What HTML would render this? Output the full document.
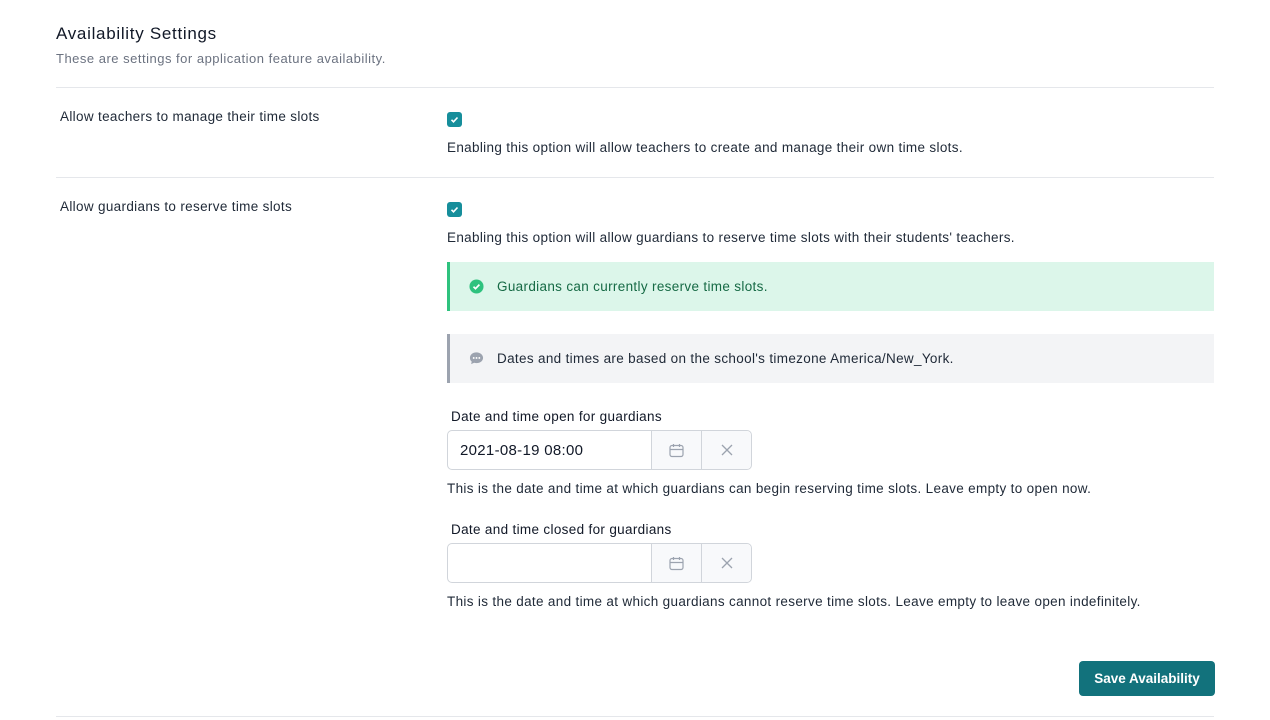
<!DOCTYPE html>
<html><head><meta charset="utf-8"><style>
*{box-sizing:border-box;margin:0;padding:0}
body{width:1270px;height:720px;background:#fff;font-family:"Liberation Sans",Arial,sans-serif;color:#1f2937;position:relative;overflow:hidden}
.a{position:absolute;white-space:nowrap}
.hr{position:absolute;left:56px;width:1158px;height:1px;background:#e5e7eb}
.t13{font-size:13.5px;color:#1f2937;letter-spacing:0.33px}
.cb{position:absolute;width:15px;height:15px;border-radius:3px;background:#168e9b}
.box{position:absolute;left:447px;width:767px;height:49px}
.inp{position:absolute;left:447px;width:305px;height:40px;border:1px solid #d1d5db;border-radius:5px;background:#fff}
.seg{position:absolute;top:0;height:38px;width:50px;background:#f8f9fb;border-left:1px solid #d1d5db}
</style></head><body>
<div class="a" style="left:56px;top:24px;font-size:17px;color:#111827;letter-spacing:0.7px">Availability Settings</div>
<div class="a" style="left:56px;top:51px;font-size:13px;color:#6b7280;letter-spacing:0.5px">These are settings for application feature availability.</div>
<div class="hr" style="top:87px"></div>
<div class="a t13" style="left:60px;top:109px">Allow teachers to manage their time slots</div>
<div class="cb" style="left:447px;top:112px"><svg width="15" height="15"><path d="M4.5 7.8l2 2 4-4.3" stroke="#fff" stroke-width="1.6" fill="none"/></svg></div>
<div class="a t13" style="left:447px;top:140px">Enabling this option will allow teachers to create and manage their own time slots.</div>
<div class="hr" style="top:177px"></div>
<div class="a t13" style="left:60px;top:199px">Allow guardians to reserve time slots</div>
<div class="cb" style="left:447px;top:202px"><svg width="15" height="15"><path d="M4.5 7.8l2 2 4-4.3" stroke="#fff" stroke-width="1.6" fill="none"/></svg></div>
<div class="a t13" style="left:447px;top:230px">Enabling this option will allow guardians to reserve time slots with their students' teachers.</div>
<div class="box" style="top:262px;background:#dcf6ea;border-left:3px solid #2ec27e">
 <svg class="a" style="left:19px;top:17px" width="15" height="15" viewBox="0 0 16 16"><circle cx="8" cy="8" r="7.5" fill="#2ec27e"/><path d="M4.8 8.2l2.1 2.1 4.2-4.3" stroke="#fff" stroke-width="1.8" fill="none"/></svg>
 <div class="a" style="left:47px;top:17px;font-size:13.5px;color:#166a45;letter-spacing:0.33px">Guardians can currently reserve time slots.</div>
</div>
<div class="box" style="top:334px;background:#f3f4f6;border-left:3px solid #9ca3af">
 <svg class="a" style="left:19px;top:17px" width="15" height="15" viewBox="0 0 16 16"><path d="M8 1.5C4 1.5 1 4 1 7.3c0 1.6.7 3 1.9 4L2.3 14l3.2-1.5c.8.3 1.6.4 2.5.4 4 0 7-2.5 7-5.6S12 1.5 8 1.5z" fill="#9ca3af"/><circle cx="5" cy="7.4" r="1" fill="#fff"/><circle cx="8" cy="7.4" r="1" fill="#fff"/><circle cx="11" cy="7.4" r="1" fill="#fff"/></svg>
 <div class="a" style="left:47px;top:17px;font-size:13.5px;color:#1f2937;letter-spacing:0.33px">Dates and times are based on the school's timezone America/New_York.</div>
</div>
<div class="a t13" style="left:451px;top:409px;color:#111827">Date and time open for guardians</div>
<div class="inp" style="top:430px">
 <div class="a" style="left:12px;top:11px;font-size:15px;color:#111827;letter-spacing:0.3px">2021-08-19 08:00</div>
 <div class="seg" style="left:203px"><svg class="a" style="left:17px;top:12px" width="15" height="15" viewBox="0 0 15 15"><rect x="1" y="2.5" width="13" height="11" rx="2" fill="none" stroke="#9ca3af" stroke-width="1.2"/><path d="M4.5 1v3M10.5 1v3M1 6.5h13" stroke="#9ca3af" stroke-width="1.2"/></svg></div>
 <div class="seg" style="left:253px;background:#f8f9fb;border-radius:0 5px 5px 0"><svg class="a" style="left:19px;top:13px" width="12" height="12"><path d="M1 1l10 10M11 1L1 11" stroke="#9ca3af" stroke-width="1.3"/></svg></div>
</div>
<div class="a t13" style="left:447px;top:481px">This is the date and time at which guardians can begin reserving time slots. Leave empty to open now.</div>
<div class="a t13" style="left:451px;top:522px;color:#111827">Date and time closed for guardians</div>
<div class="inp" style="top:543px">
 <div class="seg" style="left:203px"><svg class="a" style="left:17px;top:12px" width="15" height="15" viewBox="0 0 15 15"><rect x="1" y="2.5" width="13" height="11" rx="2" fill="none" stroke="#9ca3af" stroke-width="1.2"/><path d="M4.5 1v3M10.5 1v3M1 6.5h13" stroke="#9ca3af" stroke-width="1.2"/></svg></div>
 <div class="seg" style="left:253px;border-radius:0 5px 5px 0"><svg class="a" style="left:19px;top:13px" width="12" height="12"><path d="M1 1l10 10M11 1L1 11" stroke="#9ca3af" stroke-width="1.3"/></svg></div>
</div>
<div class="a t13" style="left:447px;top:594px">This is the date and time at which guardians cannot reserve time slots. Leave empty to leave open indefinitely.</div>
<div class="a" style="left:1079px;top:661px;width:136px;height:35px;background:#12727c;border-radius:4px;color:#fff;font-size:13.5px;font-weight:bold;text-align:center;line-height:35px">Save Availability</div>
<div class="hr" style="top:716px"></div>
</body></html>
